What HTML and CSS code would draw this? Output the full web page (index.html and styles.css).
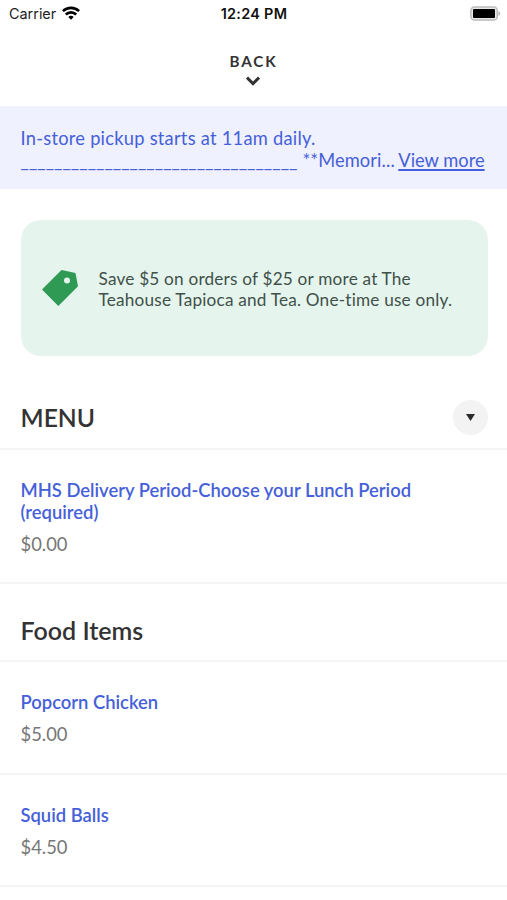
FILE: index.html
```html
<!DOCTYPE html>
<html lang="en">
<head>
    <meta charset="UTF-8">
    <meta name="viewport" content="width=device-width, initial-scale=1.0">
    <title>Menu</title>
    <link rel="stylesheet" href="styles.css">
</head>
<body>
    <div class="status-bar">
        <div class="carrier">
            <span>Carrier</span>
            <svg class="wifi" width="18" height="14" viewBox="0 0 18 14" fill="none" stroke="#000" stroke-width="2.6">
                <path d="M0.9 5.2a11.5 11.5 0 0 1 16.2 0"/>
                <path d="M3.8 8.5a7.4 7.4 0 0 1 10.4 0"/>
                <path d="M9 13.8l-2.7-2.8a3.9 3.9 0 0 1 5.4 0z" fill="#000" stroke="none"/>
            </svg>
        </div>
        <div class="time">12:24 PM</div>
        <div class="battery">
            <svg width="31" height="15" viewBox="0 0 31 15">
                <rect x="0.9" y="0.9" width="26.4" height="13.2" rx="3.6" fill="#e8e8e8" stroke="#bcbcbc" stroke-width="1.5"/>
                <rect x="3" y="3" width="22" height="9" rx="1" fill="#000"/>
                <path d="M28.4 5.2c2.4 1 2.4 3.6 0 4.6z" fill="#b5b5b5"/>
            </svg>
        </div>
    </div>

    <button type="button" class="back-button">
        <span>BACK</span>
        <svg width="14" height="10" viewBox="0 0 14 10" fill="none" stroke="#333" stroke-width="2.9">
            <path d="M1 1.6l6 6 6-6"/>
        </svg>
    </button>

    <div class="notice">
        <p class="notice-line notice-lead">In-store pickup starts at 11am daily.</p>
        <p class="notice-line notice-more">
            <span class="rule">_________________________________</span>
            <span class="memo">**Memori...</span>
            <a href="#" class="view-more">View more</a>
        </p>
    </div>

    <div class="promo">
        <svg class="tag" width="38" height="38" viewBox="0 0 38 38">
            <path fill="#2f9a54" fill-rule="evenodd" d="M20.5 1 33.5 3.7Q34.5 3.9 34.7 5L37 17.2 17.3 37 1 20.6ZM26 8.6a3 3 0 1 0 0 6 3 3 0 0 0 0-6z"/>
        </svg>
        <p class="promo-text">Save $5 on orders of $25 or more at The<br>Teahouse Tapioca and Tea. One-time use only.</p>
    </div>

    <div class="section-header menu-header">
        <h1>MENU</h1>
        <button type="button" class="menu-toggle" aria-label="Sections">
            <svg width="9" height="7" viewBox="0 0 9 7"><path d="M0 0h9L4.5 7z" fill="#2b2b2b"/></svg>
        </button>
    </div>

    <div class="item item-tall">
        <a href="#" class="item-name">MHS Delivery Period-Choose your Lunch Period<br>(required)</a>
        <p class="price">$0.00</p>
    </div>

    <div class="section-header">
        <h2>Food Items</h2>
    </div>

    <div class="item">
        <a href="#" class="item-name">Popcorn Chicken</a>
        <p class="price">$5.00</p>
    </div>

    <div class="item item-last">
        <a href="#" class="item-name">Squid Balls</a>
        <p class="price">$4.50</p>
    </div>
</body>
</html>
```
FILE: styles.css
```css
* {
    box-sizing: border-box;
}
body {
    margin: 0;
    height: 900px;
    overflow: hidden;
    background-color: #fff;
    color: #333;
    font-family: Lato, sans-serif;
    font-size: 18.4px;
    line-height: 22px;
}
h1, h2, p {
    margin: 0;
}
button {
    border: none;
    padding: 0;
    color: inherit;
    font-family: inherit;
}
.status-bar {
    display: grid;
    grid-template-columns: 1fr auto 1fr;
    align-items: center;
    height: 27px;
    padding: 0 6px 0 9px;
    font-family: Inter, sans-serif;
    font-size: 14.4px;
}
.carrier {
    display: flex;
    align-items: center;
    gap: 6px;
    color: #222;
}
.wifi {
    margin-top: -2px;
}
.time {
    margin-right: 2px;
    color: #111;
    font-weight: 600;
    letter-spacing: 0.3px;
}
.battery {
    display: flex;
    justify-content: flex-end;
}
.back-button {
    display: flex;
    flex-direction: column;
    align-items: center;
    width: 100%;
    height: 79px;
    padding: 24px 1px 0 0;
    background: none;
    font-size: 15.2px;
    font-weight: 700;
    line-height: 20px;
    letter-spacing: 1.9px;
}
.back-button span {
    margin-right: -1px;
}
.back-button svg {
    margin-top: 5px;
}
.notice {
    height: 83px;
    padding: 21px 20.5px 0;
    background-color: #eff1fe;
    color: #4560d8;
    font-size: 18.3px;
}
.notice-line {
    white-space: nowrap;
}
.notice-lead {
    letter-spacing: 0.25px;
}
.notice-more {
    display: flex;
}
.memo {
    margin-left: 5px;
    letter-spacing: 0.1px;
}
.view-more {
    margin-left: 3.5px;
    color: inherit;
    text-decoration-thickness: 1.5px;
    text-underline-offset: 2px;
}
.promo {
    display: flex;
    align-items: center;
    gap: 20px;
    height: 136px;
    margin: 31px 19.5px 0 20.5px;
    padding-left: 20px;
    border-radius: 20px;
    background-color: #e5f5ed;
}
.promo-text {
    padding-top: 1px;
    color: #41504a;
    font-size: 17.2px;
    line-height: 21px;
    letter-spacing: 0.2px;
    white-space: nowrap;
}
.section-header {
    display: flex;
    align-items: center;
    justify-content: space-between;
    height: 78px;
    padding: 15px 19px 0 20.5px;
    border-bottom: 2px solid #f5f5f5;
}
.section-header h1,
.section-header h2 {
    font-size: 25px;
    font-weight: 600;
    line-height: 30px;
}
.section-header h1 {
    padding-top: 2px;
    font-size: 24.7px;
}
.menu-header {
    height: 94px;
    padding-top: 30px;
}
.menu-toggle {
    display: flex;
    align-items: center;
    justify-content: center;
    width: 35px;
    height: 35px;
    border-radius: 50%;
    background-color: #f3f3f3;
}
.item {
    height: 113px;
    padding: 29px 20.5px 0;
    border-bottom: 2px solid #f5f5f5;
}
.item-tall {
    height: 134px;
}
.item-last {
    height: 112px;
}
.item-name {
    display: block;
    color: #4560d8;
    font-weight: 600;
    text-decoration: none;
    white-space: nowrap;
}
.price {
    margin-top: 10px;
    color: #777;
}
```
